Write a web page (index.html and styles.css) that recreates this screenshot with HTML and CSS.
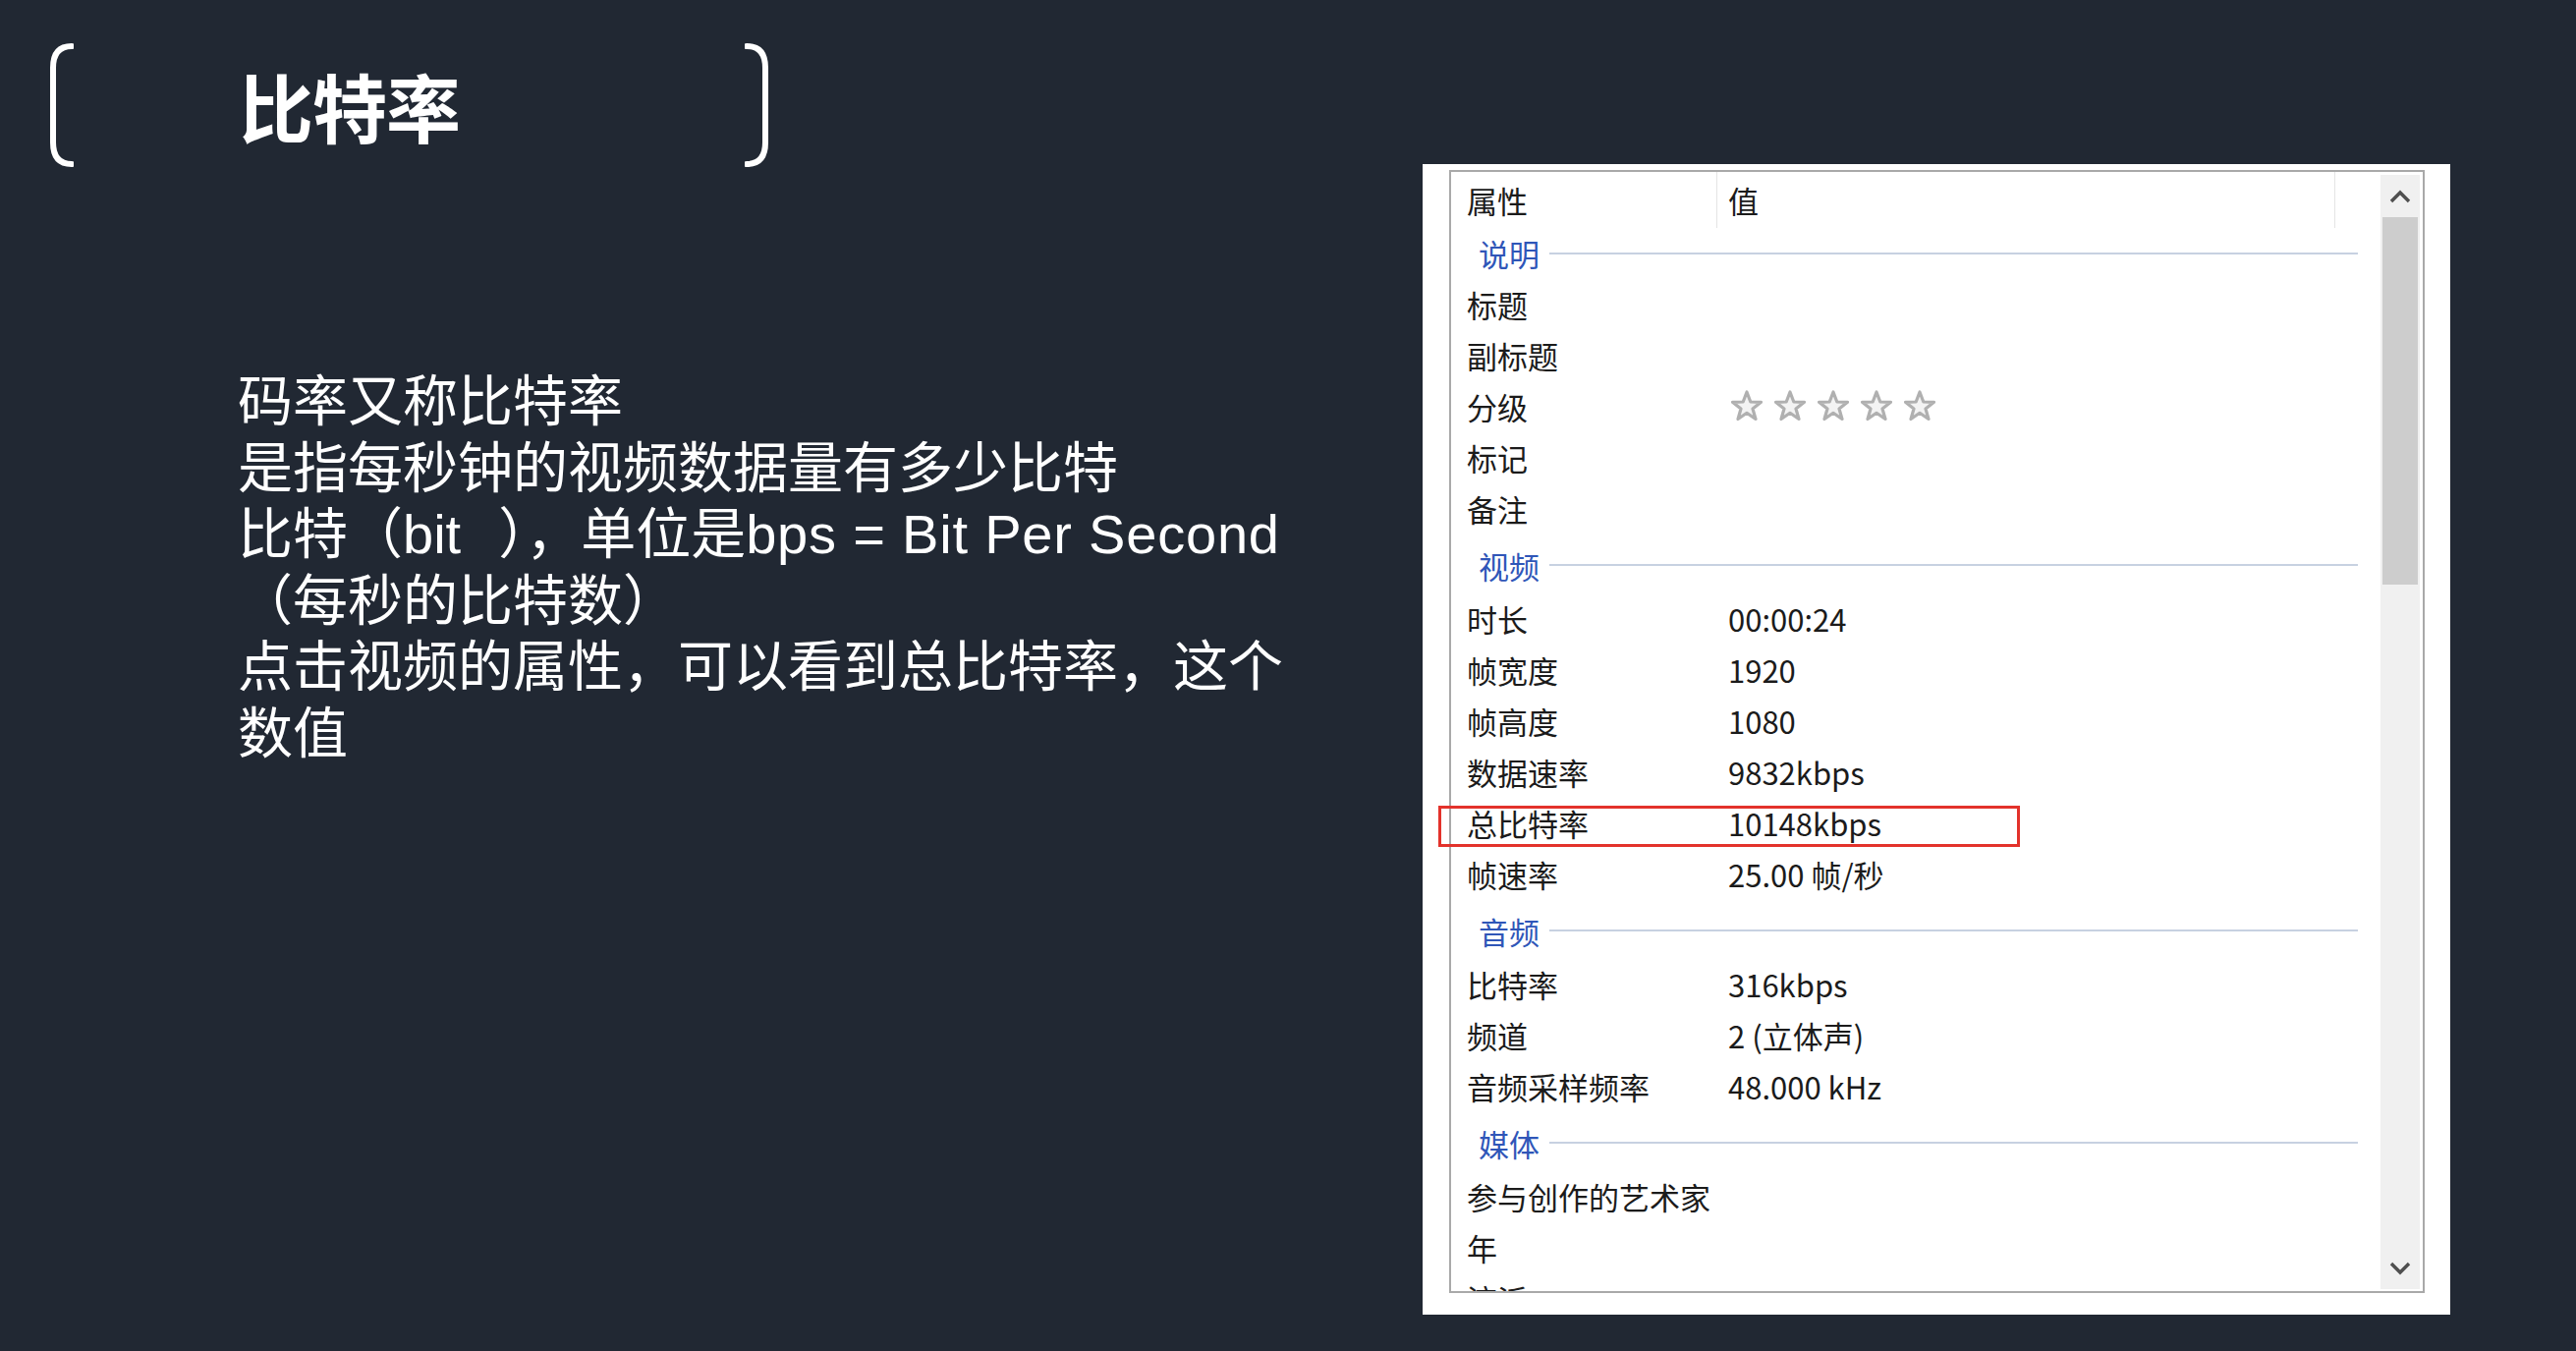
FILE: index.html
```html
<!DOCTYPE html>
<html lang="zh-CN">
<head>
<meta charset="utf-8">
<title>比特率</title>
<link rel="stylesheet" href="styles.css">
</head>
<body>
<div class="page">
  <section class="left">
    <div class="title-row">
      <svg class="bracket" width="26" height="128" viewBox="0 0 26 128"><path d="M24 4 Q5 4 5 26 L5 102 Q5 124 24 124" fill="none" stroke="#fff" stroke-width="6" stroke-linecap="round"/></svg>
      <h1 class="title">比特率</h1>
      <div class="spacer"></div>
      <svg class="bracket" width="26" height="128" viewBox="0 0 26 128"><path d="M2 4 Q21 4 21 26 L21 102 Q21 124 2 124" fill="none" stroke="#fff" stroke-width="6" stroke-linecap="round"/></svg>
    </div>
    <div class="body-text">
      <p>码率又称比特率</p>
      <p>是指每秒钟的视频数据量有多少比特</p>
      <p>比特（<span class="latin-pad">bit</span>），单位是<span class="latin-wide">bps = Bit Per Second</span></p>
      <p>（每秒的比特数）</p>
      <p>点击视频的属性，可以看到总比特率，这个</p>
      <p>数值</p>
    </div>
  </section>

  <section class="panel">
    <div class="listbox">
      <div class="list">
        <div class="head">
          <div class="hcell">属性</div>
          <div class="hcell hval">值</div>
          <div class="hcell hrest"></div>
        </div>

        <div class="group g-first"><span>说明</span><i></i></div>
        <div class="row"><span>标题</span><span></span></div>
        <div class="row"><span>副标题</span><span></span></div>
        <div class="row"><span>分级</span>
          <span class="stars">
            <svg viewBox="0 0 32 32"><polygon points="16,2 19.8,12 30.5,12.3 22,19 25,29.5 16,23.3 7,29.5 10,19 1.5,12.3 12.2,12"/></svg>
            <svg viewBox="0 0 32 32"><polygon points="16,2 19.8,12 30.5,12.3 22,19 25,29.5 16,23.3 7,29.5 10,19 1.5,12.3 12.2,12"/></svg>
            <svg viewBox="0 0 32 32"><polygon points="16,2 19.8,12 30.5,12.3 22,19 25,29.5 16,23.3 7,29.5 10,19 1.5,12.3 12.2,12"/></svg>
            <svg viewBox="0 0 32 32"><polygon points="16,2 19.8,12 30.5,12.3 22,19 25,29.5 16,23.3 7,29.5 10,19 1.5,12.3 12.2,12"/></svg>
            <svg viewBox="0 0 32 32"><polygon points="16,2 19.8,12 30.5,12.3 22,19 25,29.5 16,23.3 7,29.5 10,19 1.5,12.3 12.2,12"/></svg>
          </span>
        </div>
        <div class="row"><span>标记</span><span></span></div>
        <div class="row"><span>备注</span><span></span></div>

        <div class="group"><span>视频</span><i></i></div>
        <div class="row"><span>时长</span><span>00:00:24</span></div>
        <div class="row"><span>帧宽度</span><span>1920</span></div>
        <div class="row"><span>帧高度</span><span>1080</span></div>
        <div class="row"><span>数据速率</span><span>9832kbps</span></div>
        <div class="row"><span>总比特率</span><span>10148kbps</span></div>
        <div class="row"><span>帧速率</span><span>25.00 帧/秒</span></div>

        <div class="group"><span>音频</span><i></i></div>
        <div class="row"><span>比特率</span><span>316kbps</span></div>
        <div class="row"><span>频道</span><span>2 (立体声)</span></div>
        <div class="row"><span>音频采样频率</span><span>48.000 kHz</span></div>

        <div class="group"><span>媒体</span><i></i></div>
        <div class="row"><span>参与创作的艺术家</span><span></span></div>
        <div class="row"><span>年</span><span></span></div>
        <div class="row"><span>流派</span><span></span></div>
      </div>
      <div class="scrollbar">
        <div class="arrow">
          <svg width="22" height="14" viewBox="0 0 22 14"><path d="M2 12 L11 3 L20 12" fill="none" stroke="#4f4f4f" stroke-width="3.4"/></svg>
        </div>
        <div class="track"><div class="thumb"></div></div>
        <div class="arrow">
          <svg width="22" height="14" viewBox="0 0 22 14"><path d="M2 2 L11 11 L20 2" fill="none" stroke="#4f4f4f" stroke-width="3.4"/></svg>
        </div>
      </div>
    </div>
    <div class="highlight"></div>
  </section>
</div>
</body>
</html>
```

FILE: styles.css
```css
* { box-sizing: border-box; }

html, body {
  margin: 0;
  padding: 0;
  background: #212833;
}

.page {
  width: 2622px;
  height: 1375px;
  overflow: hidden;
  display: flex;
  background: #212833;
  font-family: "Noto Sans CJK SC", "Noto Sans", sans-serif;
}

/* ---------- left side ---------- */
.left {
  flex: 1;
  padding: 43px 0 0 49px;
  color: #fff;
}

.title-row {
  display: flex;
  align-items: center;
  width: 735px;
  height: 128px;
}

.bracket {
  display: block;
  flex: none;
}

.title {
  margin: 0 0 0 168px;
  font-size: 76px;
  line-height: 1;
  font-weight: 700;
  letter-spacing: -1px;
}

.spacer { flex: 1; }

.body-text {
  margin: 204px 0 0 193px;
  font-family: "Liberation Sans", "Noto Sans CJK SC", sans-serif;
}

.body-text p {
  margin: 0;
  font-size: 56px;
  line-height: 67.6px;
  white-space: nowrap;
  font-weight: 400;
}

.latin-pad {
  padding-right: 38px;
}

.latin-wide {
  letter-spacing: 0.8px;
}

/* ---------- properties panel ---------- */
.panel {
  position: relative;
  flex: none;
  width: 1046px;
  height: 1171px;
  margin: 167px 128px 0 0;
  background: #fff;
  padding: 6px 26px 22px 27px;
}

.listbox {
  display: flex;
  height: 100%;
  border: 2px solid #a9a9a9;
  background: #fff;
}

.list {
  flex: 1;
  overflow: hidden;
  color: #1b1b1b;
  font-size: 31px;
}

.head {
  display: grid;
  grid-template-columns: 270px 629px 1fr;
  height: 57px;
}

.hcell {
  display: flex;
  align-items: center;
  padding-left: 16px;
  line-height: 1;
}

.hval {
  border-left: 1px solid #e4e4e4;
  padding-left: 11px;
}

.hrest {
  border-left: 1px solid #e4e4e4;
}

.group {
  display: flex;
  align-items: center;
  height: 60px;
  padding: 4px 23px 0 28px;
  color: #2f56b8;
  line-height: 1;
}

.group.g-first {
  height: 51px;
  padding-top: 0;
}

.group i {
  flex: 1;
  height: 2px;
  margin-left: 10px;
  background: #c7d1e1;
}

.row {
  display: grid;
  grid-template-columns: 266px 1fr;
  align-items: center;
  height: 52px;
  padding-left: 16px;
  line-height: 1;
  white-space: nowrap;
}

.stars {
  display: flex;
  gap: 12px;
  margin-left: 3px;
}

.stars svg {
  width: 32px;
  height: 32px;
  display: block;
}

.stars polygon {
  fill: #f3f3f3;
  stroke: #b0b0b0;
  stroke-width: 3.2;
  stroke-linejoin: round;
}

.scrollbar {
  flex: none;
  width: 40px;
  margin: 3px 3px 2px 0;
  display: flex;
  flex-direction: column;
  background: #f0f0f0;
}

.arrow {
  height: 43px;
  display: flex;
  align-items: center;
  justify-content: center;
}

.track {
  flex: 1;
}

.thumb {
  height: 374px;
  margin: 0 2px;
  background: #cdcdcd;
}

.highlight {
  position: absolute;
  left: 16px;
  top: 653px;
  width: 592px;
  height: 42px;
  border: 3px solid #e3322b;
}
```
